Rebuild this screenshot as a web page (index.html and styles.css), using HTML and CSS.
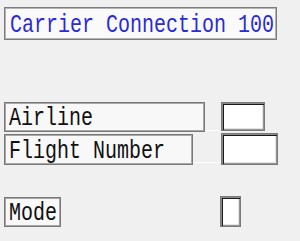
FILE: index.html
```html
<!DOCTYPE html>
<html>
<head>
<meta charset="utf-8">
<link rel="stylesheet" href="styles.css">
</head>
<body>
<div class="screen">
  <div class="title"><span class="txt">Carrier Connection 100</span></div>
  <div class="form">
    <div class="row row-airline">
      <div class="label label-airline"><span class="txt">Airline</span></div>
      <div class="field field-airline"></div>
    </div>
    <div class="row row-flight">
      <div class="label label-flight"><span class="txt">Flight Number</span></div>
      <div class="field field-flight"></div>
    </div>
    <div class="row row-mode">
      <div class="label label-mode"><span class="txt">Mode</span></div>
      <div class="field field-mode"></div>
    </div>
  </div>
</div>
</body>
</html>
```
FILE: styles.css
```css
html, body {
  margin: 0;
  padding: 0;
  background: #f0f0f0;
  width: 300px;
  height: 241px;
  overflow: hidden;
}
.screen {
  display: flex;
  flex-direction: column;
  padding: 7px 0 0 4px;
  font-family: "Liberation Mono", monospace;
  font-size: 20px;
}
.txt {
  display: inline-block;
  transform: scaleY(1.3);
  transform-origin: 0 50%;
  white-space: pre;
  line-height: 1;
}
.title {
  box-sizing: border-box;
  width: 273px;
  height: 33px;
  border: 1px solid #7c7c7c;
  box-shadow: inset 0 0 0 1px #b4b4b4;
  background: #fafafa;
  color: #2a2ad6;
  display: flex;
  align-items: center;
  padding: 3px 0 0 5px;
}
.form {
  display: flex;
  flex-direction: column;
  margin-top: 62px;
}
.row {
  display: flex;
  align-items: flex-start;
  background: linear-gradient(#fff, #fff) no-repeat 0 28px / 216px 1px;
}
.row-flight {
  margin-top: 1px;
  background-position: 0 29px;
}
.row-mode {
  margin-top: 31px;
  background: none;
}
.label {
  box-sizing: border-box;
  height: 30px;
  border: 1px solid #787878;
  box-shadow: inset 0 0 0 1px #a8a8a8;
  background: #f8f8f8;
  color: #111;
  display: flex;
  align-items: center;
  padding: 2px 0 0 4px;
}
.label-airline { width: 201px; }
.label-flight { width: 189px; height: 31px; margin-top: 1px; }
.label-mode { width: 57px; margin-top: 1px; }
.field {
  box-sizing: border-box;
  background: #fff;
  border: 1px solid #7a7a7a;
  box-shadow: inset 1px 1px 0 #8a8a8a, inset 2px 2px 0 #1a1a1a, inset -1px -1px 0 #959595, inset -2px -2px 0 #e6e6e6;
}
.field-airline { width: 44px; height: 29px; margin-left: 16px; }
.field-flight { width: 57px; height: 32px; margin-left: 28px; }
.field-mode { width: 21px; height: 31px; margin-left: 159px; }
```
